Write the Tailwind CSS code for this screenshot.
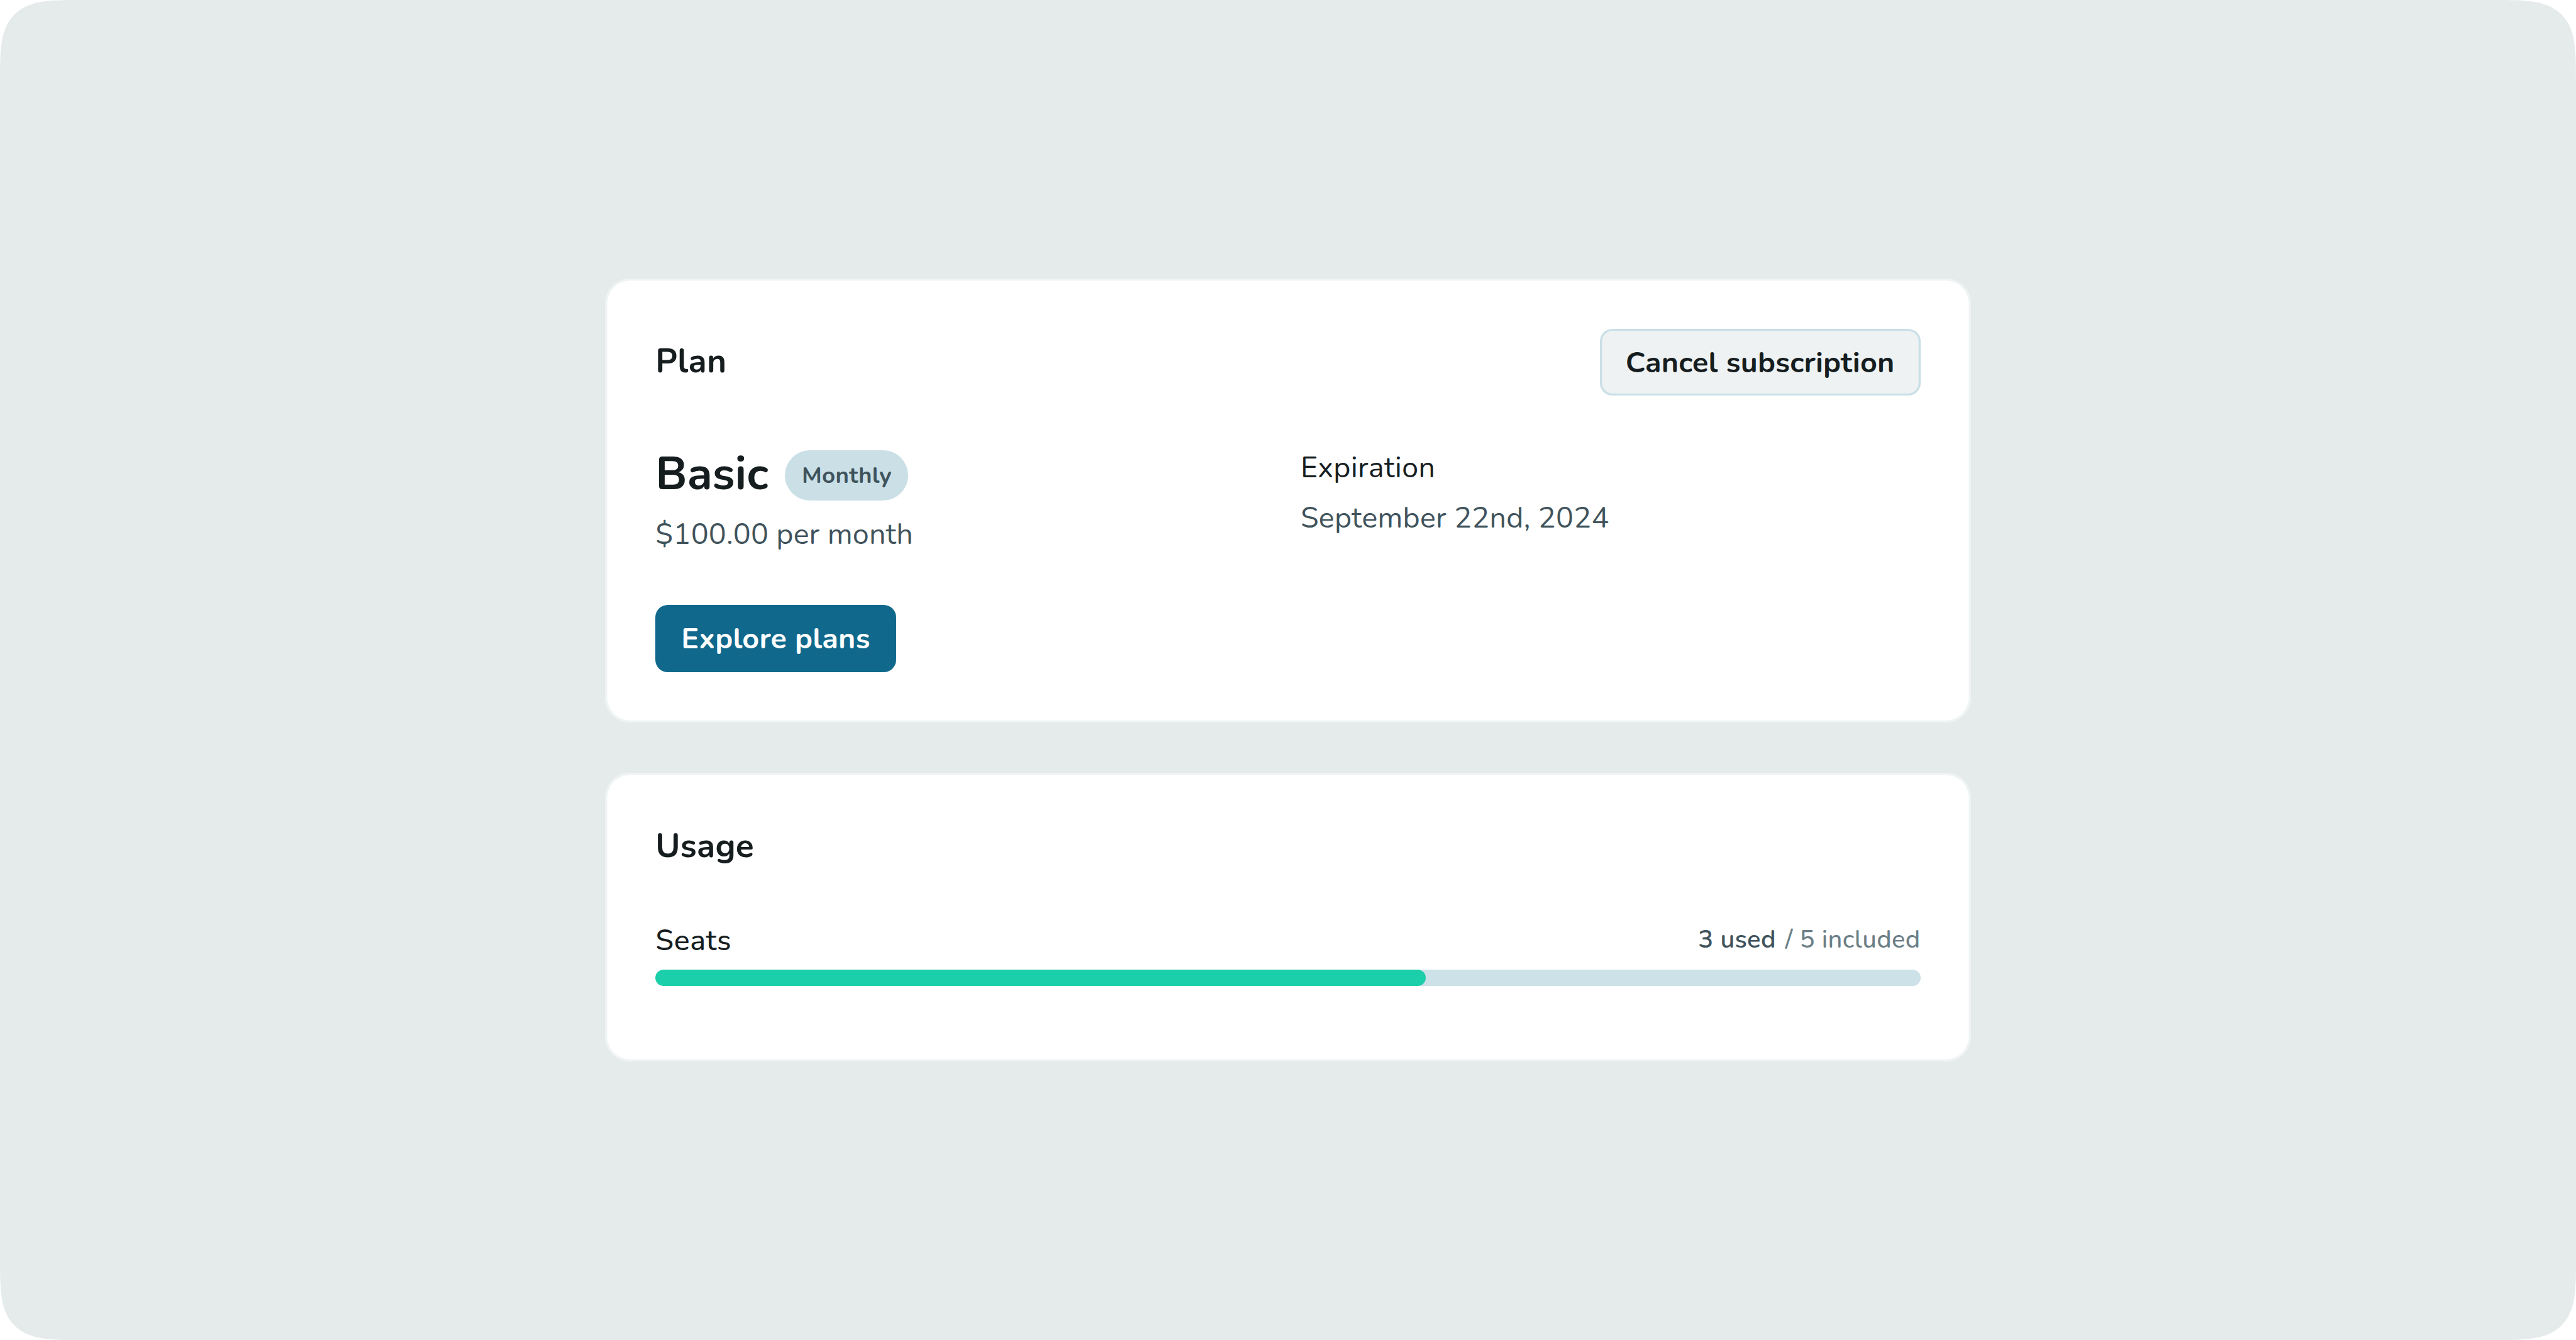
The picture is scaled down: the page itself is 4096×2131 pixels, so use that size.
<!DOCTYPE html>
<html lang="en" class="text-[53.28px]">
<head>
  <meta charset="UTF-8" />
  <meta name="viewport" content="width=device-width, initial-scale=1.0" />
  <title>Billing</title>
  <script src="https://cdn.jsdelivr.net/npm/@tailwindcss/browser@4"></script>
</head>
<body class="bg-white font-['Nunito','Lato',sans-serif] text-[#161d1f]">
  <main class="h-screen overflow-hidden flex flex-col items-center justify-center gap-6 bg-[#e5ebeb] rounded-3xl supports-[corner-shape:squircle]:rounded-[2.4rem] supports-[corner-shape:squircle]:[corner-shape:superellipse(1.8)]">

    <!-- Plan -->
    <section class="w-163 bg-white rounded-xl inset-ring-[0.0625rem] inset-ring-[#eef3f4] p-6">
      <div class="flex items-center justify-between">
        <h2 class="text-base leading-none font-bold tracking-[0.005em] pb-[0.04em]">Plan</h2>
        <button class="h-8 px-[0.77rem] pt-[0.05em] rounded-md bg-[#eef2f3] inset-ring-[0.0625rem] inset-ring-[#cae0e6] text-sm leading-none font-bold tracking-[0.0057em]">Cancel subscription</button>
      </div>

      <div class="mt-6 grid grid-cols-2 gap-3">
        <div>
          <div class="h-7 flex items-center gap-2">
            <p class="text-[1.375rem] leading-none font-bold pb-[0.02em]">Basic</p>
            <span class="h-6 px-2 pt-[0.05em] flex items-center rounded-full bg-[#cae0e6] text-[#3f535c] text-[0.6875rem] leading-none font-bold tracking-[0.008em]">Monthly</span>
          </div>
          <p class="mt-1 h-[1.3125rem] flex items-center text-sm leading-none tracking-[0.004em] text-[#3f535c]">$100.00 per month</p>
          <button class="mt-[1.4375rem] h-8 px-[0.77rem] pt-[0.05em] rounded-md bg-[#10698c] text-white text-sm leading-none font-bold tracking-[0.0057em]">Explore plans</button>
        </div>
        <div class="flex flex-col gap-[0.1875rem]">
          <p class="h-[1.3125rem] flex items-center text-sm leading-none tracking-[0.008em]">Expiration</p>
          <p class="h-[1.3125rem] flex items-center text-sm leading-none tracking-[0.005em] text-[#3f535c]">September 22nd, 2024</p>
        </div>
      </div>
    </section>

    <!-- Usage -->
    <section class="w-163 bg-white rounded-xl inset-ring-[0.0625rem] inset-ring-[#eef3f4] p-6 pb-9">
      <h2 class="h-[1.375rem] flex items-center text-base leading-none font-bold tracking-[0.004em]">Usage</h2>
      <div class="mt-6 h-[1.3125rem] flex items-center justify-between">
        <p class="text-sm leading-none font-medium tracking-[0.0125em]">Seats</p>
        <p class="flex gap-[0.28rem] text-xs leading-none pb-[0.08em]">
          <span class="font-semibold tracking-[0.008em] text-[#3f535c]">3 used</span>
          <span class="font-medium tracking-[0.01em] text-[#6c7f86]">/ 5 included</span>
        </p>
      </div>
      <div class="mt-[0.1875rem] h-2 rounded-full bg-[#cde1e8] overflow-hidden">
        <div class="h-full rounded-full bg-[#1acfa9]" style="width: 60.9%"></div>
      </div>
    </section>

  </main>
</body>
</html>
